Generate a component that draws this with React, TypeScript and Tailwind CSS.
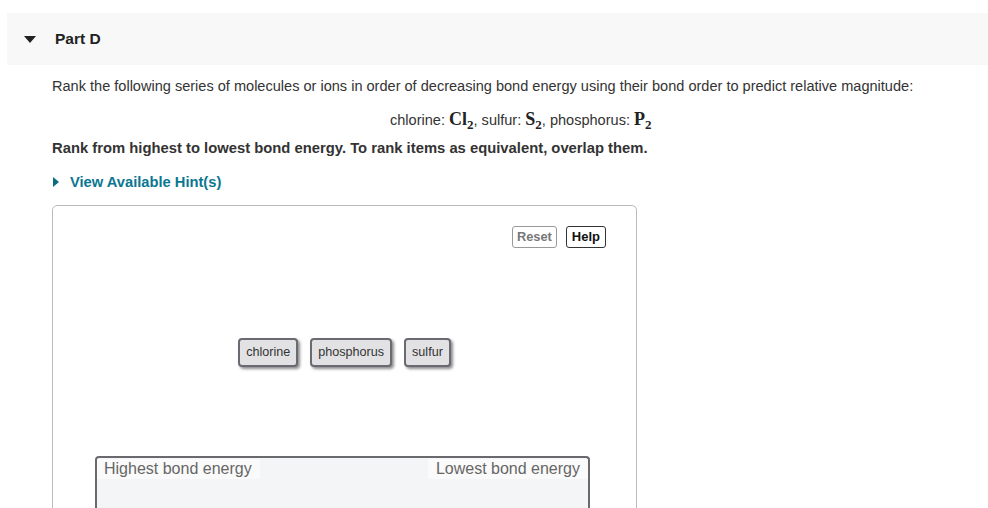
const tiles = ['chlorine', 'phosphorus', 'sulfur'];

function Formula({ sym }: { sym: string }) {
  return (
    <span className="font-['Liberation_Serif',serif] text-[18px] font-bold text-[#222]">
      {sym}
      <sub className="text-[13px] align-[-1px]">2</sub>
    </span>
  );
}

export default function App() {
  return (
    <div className="h-[508px] w-[988px] overflow-hidden bg-white pl-[7px] font-['Liberation_Sans',Arial,sans-serif] text-[#333]">
      <div className="mt-[13px] flex h-[52px] items-center bg-[#f8f8f8]">
        <span className="ml-[17px] h-0 w-0 border-x-[6px] border-t-[7px] border-x-transparent border-t-[#222]" />
        <span className="ml-[19px] text-[15.5px] font-bold text-[#222]">Part D</span>
      </div>

      <div className="pl-[45px]">
        <p className="mt-[12px] text-[14.55px] leading-[18px]">
          Rank the following series of molecules or ions in order of decreasing bond energy using their bond order to predict relative magnitude:
        </p>
        <p className="mt-[14px] pl-[338px] text-[14.55px] leading-[20px]">
          chlorine: <Formula sym="Cl" />, sulfur: <Formula sym="S" />, phosphorus: <Formula sym="P" />
        </p>
        <p className="mt-[9px] text-[14.8px] font-bold leading-[18px]">
          Rank from highest to lowest bond energy. To rank items as equivalent, overlap them.
        </p>
        <div className="mt-[14px] flex items-center">
          <span className="ml-[1px] h-0 w-0 border-y-[5px] border-l-[6px] border-y-transparent border-l-[#0b6b82]" />
          <span className="ml-[11px] text-[14.7px] font-bold text-[#0b7691]">View Available Hint(s)</span>
        </div>

        <div className="mt-[12px] flex h-[320px] w-[585px] flex-col rounded-[5px] border border-[#bbb]">
          <div className="mt-[20px] flex justify-end gap-[9px] pr-[30px]">
            <button className="h-[22px] rounded-[3px] border border-[#999] bg-white px-[4px] text-[12.8px] font-bold text-[#777]">
              Reset
            </button>
            <button className="h-[22px] rounded-[3px] border border-[#333] bg-white px-[5px] text-[13px] font-bold text-[#111]">
              Help
            </button>
          </div>

          <div className="mt-[90px] flex justify-center gap-[12px]">
            {tiles.map((t) => (
              <div
                key={t}
                className="flex h-[29px] items-center rounded-[4px] border-2 border-[#6a6a72] bg-[#e2e2e4] px-[6px] text-[12.6px] text-[#333] shadow-[2px_2px_3px_rgba(0,0,0,0.45)]"
              >
                {t}
              </div>
            ))}
          </div>

          <div className="mt-[89px] ml-[42px] h-[80px] w-[495px] rounded-t-[4px] border-2 border-b-0 border-[#6a6a6e] bg-[#f4f5f6]">
            <div className="flex justify-between pt-[1px] text-[16px] leading-[20px] text-[#666]">
              <span className="bg-[#fafafa] pl-[7px] pr-[8px]">Highest bond energy</span>
              <span className="bg-[#fafafa] pl-[8px] pr-[8px]">Lowest bond energy</span>
            </div>
          </div>
        </div>
      </div>
    </div>
  );
}
